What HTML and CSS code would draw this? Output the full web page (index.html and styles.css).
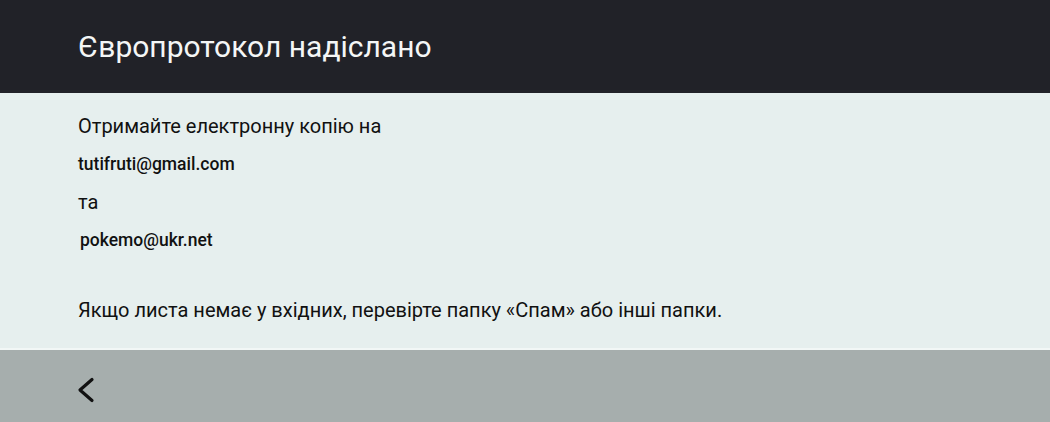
FILE: index.html
```html
<!DOCTYPE html>
<html lang="uk">
<head>
<meta charset="utf-8">
<link rel="stylesheet" href="styles.css">
</head>
<body>
<div class="page">
  <header class="header">
    <h1 class="title">Європротокол надіслано</h1>
  </header>
  <main class="content">
    <p class="line">Отримайте електронну копію на</p>
    <p class="line email">tutifruti@gmail.com</p>
    <p class="line">та</p>
    <p class="line email email-2">pokemo@ukr.net</p>
    <p class="line note">Якщо листа немає у вхідних, перевірте папку «Спам» або інші папки.</p>
  </main>
  <footer class="footer">
    <button class="back" aria-label="Назад">
      <svg width="18" height="26" viewBox="0 0 18 26"><path d="M15 2.5 L3 13 L15 23.5" fill="none" stroke="#111" stroke-width="3.2" stroke-linecap="round" stroke-linejoin="round"/></svg>
    </button>
  </footer>
</div>
</body>
</html>
```
FILE: styles.css
```css
html, body {
  margin: 0;
  padding: 0;
}
body {
  font-family: Roboto, "Noto Sans", sans-serif;
  background: #e6efee;
  color: #111;
}
.page {
  width: 1050px;
  height: 422px;
  display: flex;
  flex-direction: column;
}
.header {
  height: 93px;
  background: #212228;
  display: flex;
  align-items: center;
  padding-left: 78px;
  flex-shrink: 0;
}
.title {
  margin: 0;
  font-weight: 400;
  font-size: 30px;
  color: #f4f6f6;
}
.content {
  flex: 1;
  padding: 14px 0 0 78px;
  display: flex;
  flex-direction: column;
}
.line {
  margin: 0;
  height: 38px;
  line-height: 38px;
  font-size: 20px;
}
.email {
  font-size: 17.5px;
  font-weight: 500;
}
.email-2 {
  padding-left: 2px;
}
.note {
  margin-top: 32px;
  font-size: 20px;
}
.footer {
  height: 72px;
  flex-shrink: 0;
  background: #a6aead;
  border-top: 2px solid #f2f7f6;
  display: flex;
  align-items: center;
  padding-left: 77px;
}
.back {
  background: none;
  border: 0;
  padding: 0;
  margin-top: 7px;
  width: 18px;
  height: 26px;
  display: block;
}
.back svg { display: block; }
```
